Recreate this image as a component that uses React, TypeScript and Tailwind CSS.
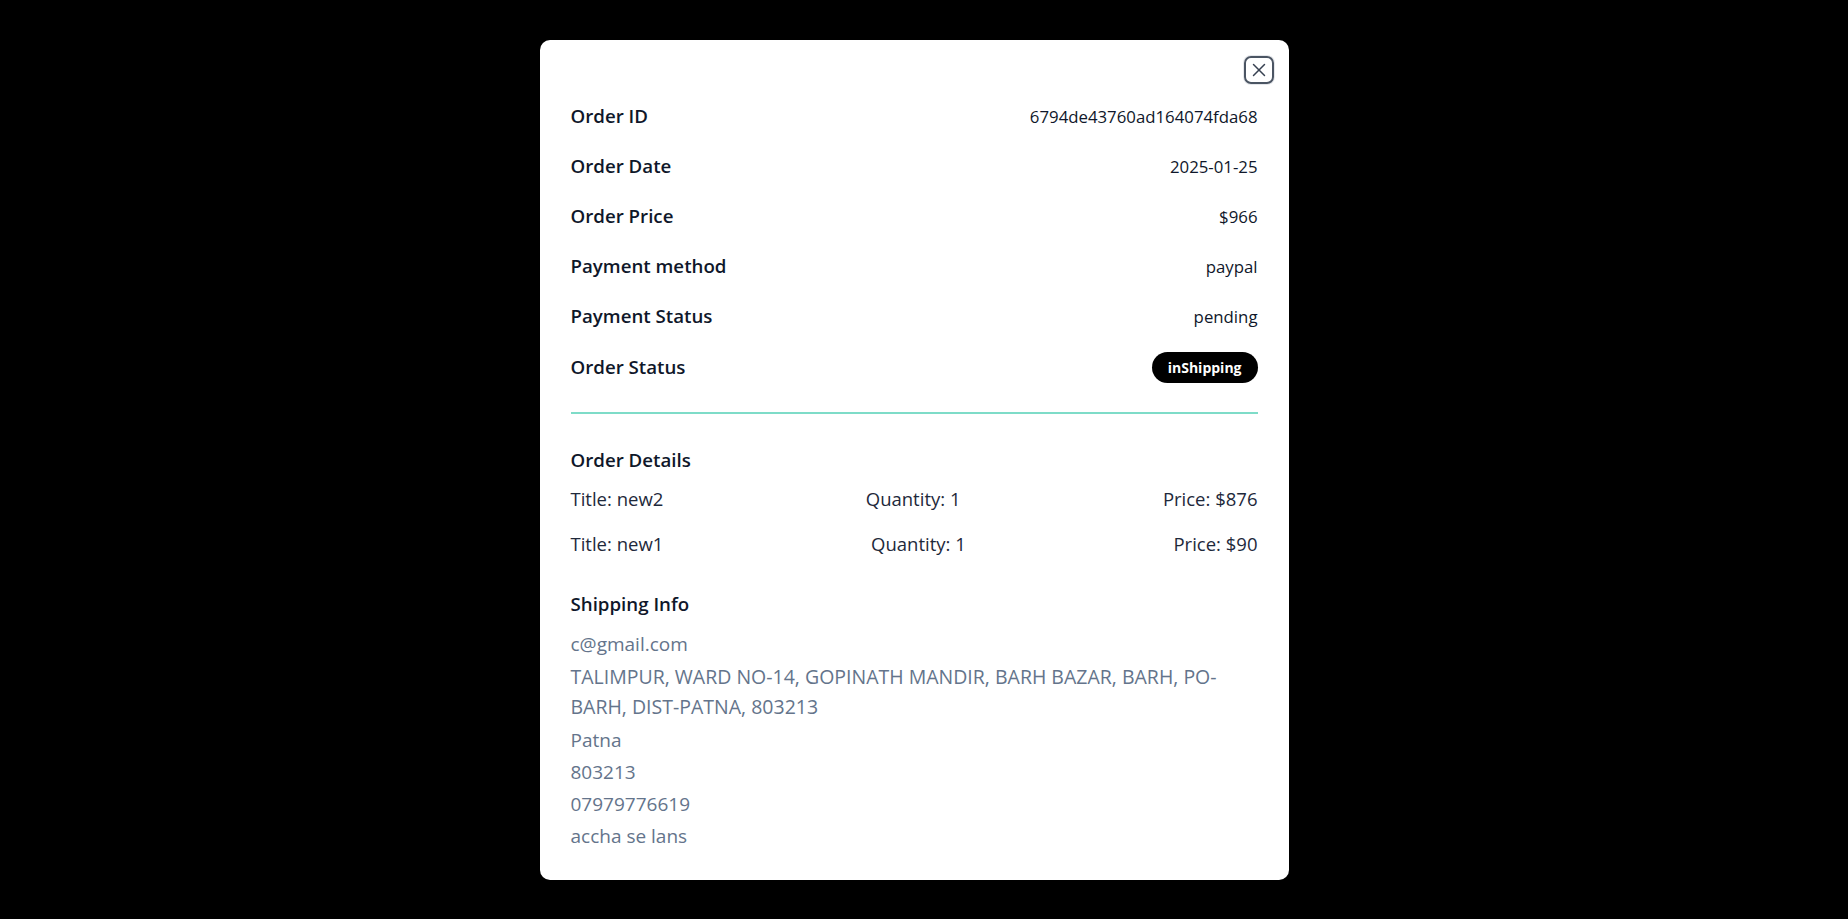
import { X } from "lucide-react";

interface InfoRow {
  label: string;
  value: string;
}

interface OrderItem {
  title: string;
  quantity: number;
  price: number;
}

const infoRows: InfoRow[] = [
  { label: "Order ID", value: "6794de43760ad164074fda68" },
  { label: "Order Date", value: "2025-01-25" },
  { label: "Order Price", value: "$966" },
  { label: "Payment method", value: "paypal" },
  { label: "Payment Status", value: "pending" },
];

const items: OrderItem[] = [
  { title: "new2", quantity: 1, price: 876 },
  { title: "new1", quantity: 1, price: 90 },
];

const shipping = {
  email: "c@gmail.com",
  address:
    "TALIMPUR, WARD NO-14, GOPINATH MANDIR, BARH BAZAR, BARH, PO-BARH, DIST-PATNA, 803213",
  city: "Patna",
  zip: "803213",
  phone: "07979776619",
  note: "accha se lans",
};

export default function App() {
  return (
    <div
      className="min-h-screen w-full bg-black flex items-center justify-center pr-[20px]"
      style={{ fontFamily: '"Open Sans", "Noto Sans", sans-serif' }}
    >
      <div className="w-[749px] bg-white rounded-[10px] pt-4 pb-[30px] px-[31px] text-[#0f172a]">
        {/* close */}
        <div className="flex justify-end mr-[-16px]">
          <button className="w-[30px] h-[28px] flex items-center justify-center rounded-[7px] border-2 border-[#4b5563] ring-1 ring-gray-200 text-[#374151]">
            <X size={22} strokeWidth={1.6} />
          </button>
        </div>

        {/* summary rows */}
        <div className="mt-2">
          {infoRows.map((row) => (
            <div key={row.label} className="h-[50px] flex items-center justify-between">
              <span className="text-[18.7px] font-semibold">{row.label}</span>
              <span className="text-[16.8px] font-medium">{row.value}</span>
            </div>
          ))}
          <div className="h-[50px] flex items-center justify-between pt-[2px]">
            <span className="text-[18.7px] font-semibold">Order Status</span>
            <span className="h-[31px] px-4 rounded-full bg-black text-white text-[14px] font-bold flex items-center">
              inShipping
            </span>
          </div>
        </div>

        <div className="mt-5 h-[2px] bg-[#7edcc8]" />

        {/* order details */}
        <h3 className="mt-8 text-[18.7px] leading-7 font-semibold">Order Details</h3>
        <div className="mt-[3px]">
          {items.map((item) => (
            <div key={item.title} className="h-[45px] flex items-center justify-between text-[18.5px] text-[#1e293b]">
              <span>Title: {item.title}</span>
              <span>Quantity: {item.quantity}</span>
              <span>Price: ${item.price}</span>
            </div>
          ))}
        </div>

        {/* shipping */}
        <h3 className="mt-[23px] text-[18.7px] leading-7 font-semibold">Shipping Info</h3>
        <div className="mt-3 flex flex-col gap-1 text-[19px] text-[#64748b]">
          <p className="leading-7">{shipping.email}</p>
          <p className="leading-[30px] text-[19.5px]">{shipping.address}</p>
          <p className="leading-7">{shipping.city}</p>
          <p className="leading-7">{shipping.zip}</p>
          <p className="leading-7">{shipping.phone}</p>
          <p className="leading-7">{shipping.note}</p>
        </div>
      </div>
    </div>
  );
}
